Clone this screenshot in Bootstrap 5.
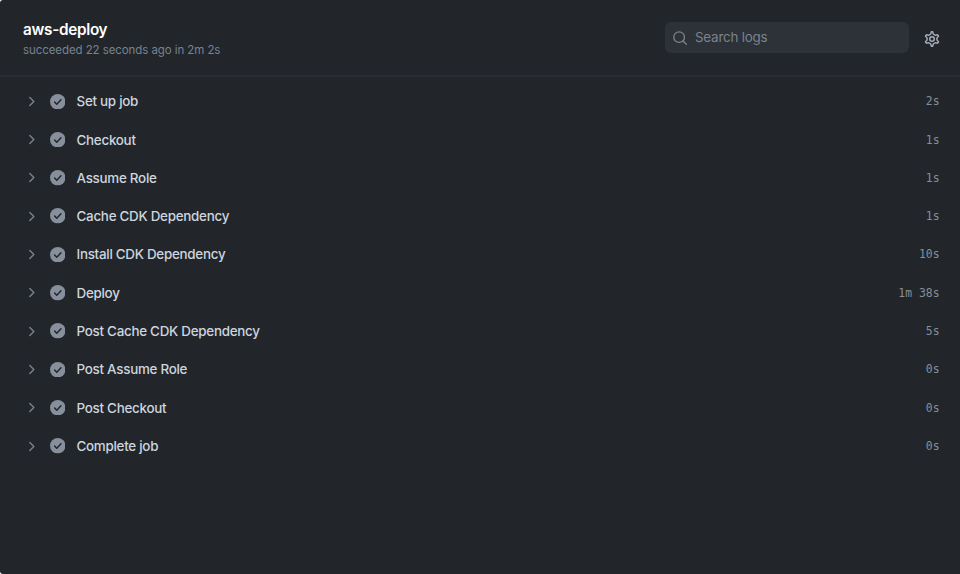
<!DOCTYPE html>
<html lang="en">
  <head>
    <meta charset="UTF-8" />
    <meta name="viewport" content="width=device-width, initial-scale=1.0" />
    <title>aws-deploy</title>
    <link href="https://cdn.jsdelivr.net/npm/bootstrap@5.3.0/dist/css/bootstrap.min.css" rel="stylesheet" />
    <style>
      body {
        background: #fff;
        font-family: Inter, "Liberation Sans", sans-serif;
      }
      .job-log {
        background: #22262b;
        border-radius: 3px 0 0 3px;
        overflow: hidden;
      }
      .job-header {
        height: 77px;
        padding: 19px 20px 0 23px;
        border-bottom: 2px solid #282c32;
      }
      .job-title {
        font-size: 15.3px;
        line-height: 21px;
        font-weight: 600;
        letter-spacing: -0.3px;
        color: #fff;
      }
      .job-status {
        font-size: 11.5px;
        line-height: 20px;
        letter-spacing: -0.08px;
        color: #768390;
      }
      .search-box {
        width: 244.5px;
        height: 30.5px;
        margin-top: 3px;
        padding-left: 8.5px;
        border-radius: 6px;
        background: #2d3138;
        color: #7b838d;
      }
      .search-box svg {
        margin-top: 1px;
      }
      .search-box input,
      .search-box input:focus {
        color: #7b838d;
        font-size: 13.4px;
        line-height: 20px;
        letter-spacing: -0.22px;
        box-shadow: none;
      }
      .search-box input::placeholder {
        color: #7b838d;
      }
      .btn-settings {
        margin: 12px 0 0 15px;
        color: #a4adb8;
        line-height: 0;
      }
      .step-list {
        padding-top: 5.2px;
      }
      .step {
        height: 38.3px;
        padding: 0 20.5px 0 23.5px;
        font-size: 13.4px;
        color: #cdd5df;
      }
      .step-chevron {
        color: #768390;
      }
      .step-check {
        margin: 0 11.5px 0 11px;
        color: #868f9b;
      }
      .step-name {
        font-weight: 500;
        letter-spacing: -0.27px;
      }
      .step-time {
        padding-top: 1px;
        font-family: "DejaVu Sans Mono", monospace;
        font-size: 11.4px;
        color: #858e99;
      }
    </style>
  </head>
  <body>
    <svg class="d-none">
      <symbol id="icon-chevron" viewBox="0 0 16 16">
        <path d="M6.2 3.7 10.5 8l-4.3 4.3" fill="none" stroke="currentColor" stroke-width="1.5" stroke-linecap="round" stroke-linejoin="round" />
      </symbol>
      <symbol id="icon-check" viewBox="0 0 16 16">
        <circle cx="8" cy="8" r="8" fill="currentColor" />
        <path d="m4.75 8.25 2.25 2.25 4.3-4.5" fill="none" stroke="#22262b" stroke-width="1.5" stroke-linecap="round" stroke-linejoin="round" />
      </symbol>
    </svg>

    <main class="job-log vh-100">
      <header class="job-header d-flex align-items-start">
        <div class="me-auto">
          <h1 class="job-title mb-0">aws-deploy</h1>
          <div class="job-status">succeeded 22 seconds ago in 2m 2s</div>
        </div>
        <div class="search-box d-flex align-items-center">
          <svg class="flex-shrink-0" width="14" height="14" viewBox="0 0 16 16" fill="none" stroke="currentColor" stroke-width="1.5" stroke-linecap="round">
            <circle cx="7" cy="7" r="6.1" />
            <path d="m11.4 11.4 3.8 3.8" />
          </svg>
          <input type="text" class="form-control border-0 bg-transparent py-0 px-2" placeholder="Search logs" aria-label="Search logs" />
        </div>
        <button type="button" class="btn btn-settings border-0 p-0" aria-label="Settings">
          <svg width="16" height="16" viewBox="0.3 0.3 15.4 15.4" fill="none" stroke="currentColor" stroke-width="1.4">
            <path d="M7.43 1.1h1.14c.04 0 .11.04.14.15L9 2.5c.15.56.55.97 1 1.2l.5.29c.42.28.97.42 1.53.27l1.2-.34c.11-.03.18.02.2.05l.8 1.35c.02.03.02.11-.06.19l-.93.88c-.41.41-.56.96-.53 1.46v.3c-.03.5.12 1.05.53 1.46l.93.88c.08.08.08.16.06.19l-.8 1.35c-.02.03-.09.08-.2.05l-1.2-.34c-.56-.15-1.11-.01-1.53.27l-.5.29c-.45.23-.85.64-1 1.2l-.29 1.25c-.03.11-.1.15-.14.15H7.43c-.04 0-.11-.04-.14-.15L7 13.5c-.15-.56-.55-.97-1-1.2l-.5-.29c-.42-.28-.97-.42-1.53-.27l-1.2.34c-.11.03-.18-.02-.2-.05l-.8-1.35c-.02-.03-.02-.11.06-.19l.93-.88c.41-.41.56-.96.53-1.46v-.3c.03-.5-.12-1.05-.53-1.46l-.93-.88c-.08-.08-.08-.16-.06-.19l.8-1.35c.02-.03.09-.08.2-.05l1.2.34c.56.15 1.11.01 1.53-.27l.5-.29c.45-.23.85-.64 1-1.2l.29-1.25c.03-.11.1-.15.14-.15z" />
            <circle cx="8" cy="8" r="2.2" />
          </svg>
        </button>
      </header>

      <div id="steps" class="step-list"></div>
    </main>

    <script src="https://cdn.jsdelivr.net/npm/bootstrap@5.3.0/dist/js/bootstrap.bundle.min.js"></script>
    <script>
      const steps = [
        ['Set up job', '2s'],
        ['Checkout', '1s'],
        ['Assume Role', '1s'],
        ['Cache CDK Dependency', '1s'],
        ['Install CDK Dependency', '10s'],
        ['Deploy', '1m 38s'],
        ['Post Cache CDK Dependency', '5s'],
        ['Post Assume Role', '0s'],
        ['Post Checkout', '0s'],
        ['Complete job', '0s'],
      ];

      document.getElementById('steps').innerHTML = steps
        .map(
          ([name, time]) => `
        <div class="step d-flex align-items-center">
          <svg class="step-chevron" width="15" height="15"><use href="#icon-chevron" /></svg>
          <svg class="step-check" width="15.5" height="15.5"><use href="#icon-check" /></svg>
          <span class="step-name me-auto">${name}</span>
          <span class="step-time">${time}</span>
        </div>`
        )
        .join('');
    </script>
  </body>
</html>
